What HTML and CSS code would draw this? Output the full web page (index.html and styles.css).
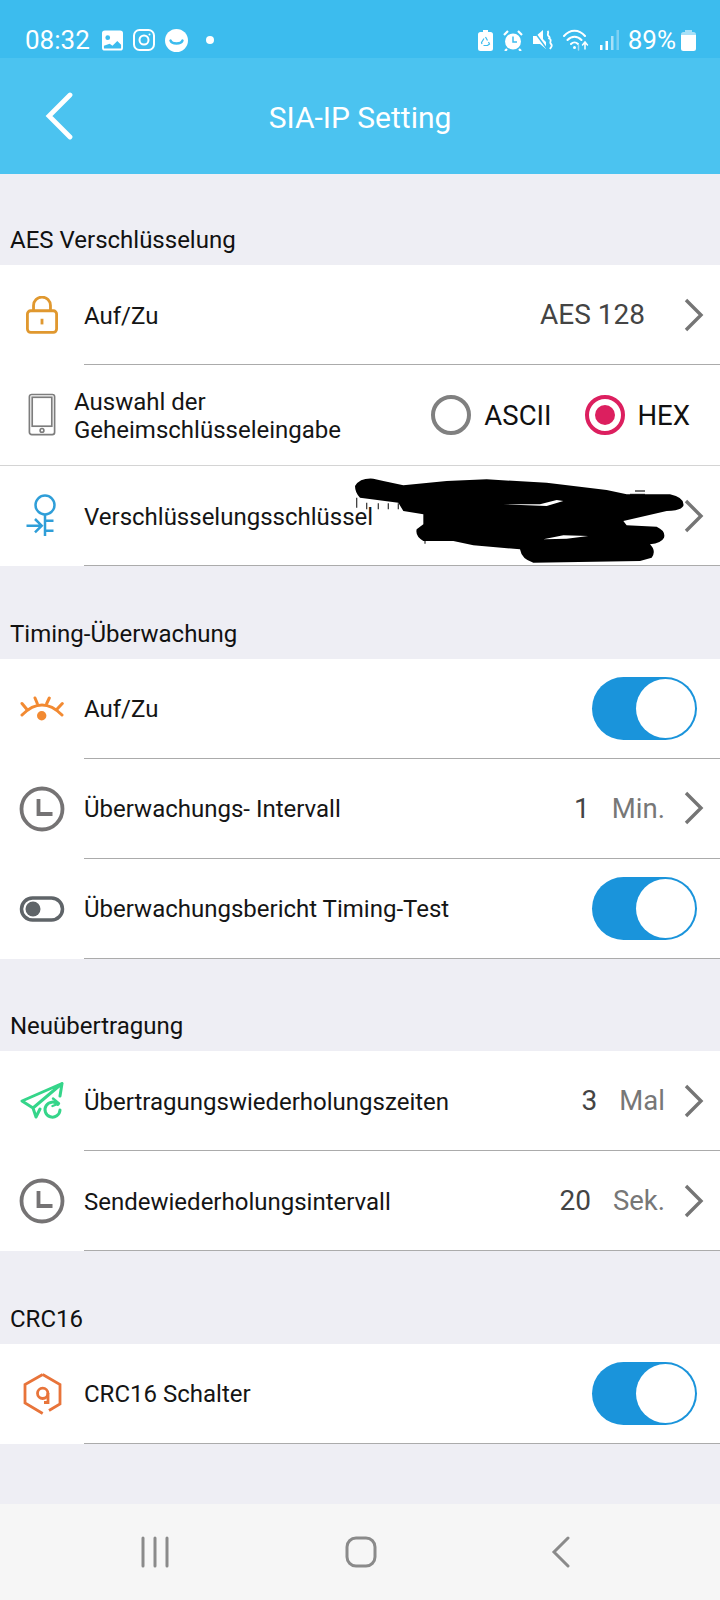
FILE: index.html
```html
<!DOCTYPE html>
<html lang="de">
<head>
<meta charset="utf-8">
<title>SIA-IP Setting</title>
<link rel="stylesheet" href="styles.css">
</head>
<body>
<div class="app">
  <div class="statusbar">
    <div class="sb-left">
      <span class="time">08:32</span>
      <svg class="si si-a" width="21" height="21" viewBox="0 0 22 21"><path fill="#fff" fill-rule="evenodd" d="M3 0h16a3 3 0 0 1 3 3v15a3 3 0 0 1-3 3H3a3 3 0 0 1-3-3V3a3 3 0 0 1 3-3zM2 16v2a1 1 0 0 0 1 1h16a1 1 0 0 0 1-1v-3l-4-4-5 5-3-2zM6 5a2.500 2.500 0 1 0 0 5 2.500 2.500 0 0 0 0-5z"/></svg>
      <svg class="si" width="22" height="22" viewBox="0 0 22 22" fill="none" stroke="#fff" stroke-width="2"><rect x="1" y="1" width="20" height="20" rx="5.500"/><circle cx="11" cy="11" r="4.500"/><circle cx="16.500" cy="5.500" r="1" fill="#fff" stroke="none"/></svg>
      <svg class="si" width="23" height="23" viewBox="0 0 23 23"><circle cx="11.500" cy="11.500" r="11.500" fill="#fff"/><path d="M5.500 11.500c1.500 4 10.500 4 12 0" fill="none" stroke="#3cbcee" stroke-width="2.400" stroke-linecap="round"/></svg>
      <span class="dot"></span>
    </div>
    <div class="sb-right">
      <svg width="15" height="21" viewBox="0 0 15 21"><path fill="#fff" d="M5 0h5v2h2.500A2.500 2.500 0 0 1 15 4.500V18.500A2.500 2.500 0 0 1 12.500 21h-10A2.500 2.500 0 0 1 0 18.500V4.500A2.500 2.500 0 0 1 2.500 2H5z"/><path d="M7.500 7l2 3.500M10.500 12l1 2-2 1.500h-4M4 14l-.5-1.500 2.500-4" fill="none" stroke="#3cbcee" stroke-width="1.200"/></svg>
      <svg width="20" height="21" viewBox="0 0 20 21"><circle cx="10" cy="11.500" r="8" fill="#fff"/><path d="M10 6.500v5.500h4" fill="none" stroke="#3cbcee" stroke-width="1.500"/><path d="M1 5l4-4M19 5l-4-4M4 19l-2 2M16 19l2 2" stroke="#fff" stroke-width="2.200"/></svg>
      <svg width="20" height="20" viewBox="0 0 20 20"><path fill="#fff" d="M0 6h3l7-6v9l3 3v7L7 14H0z"/><path d="M0 0l14 19" stroke="#3cbcee" stroke-width="1.500"/><path d="M14.500 1c2 2-1 3 1 5s1 2 0 3M17 9c2 2-1 3 1 5s0 3-1 5" fill="none" stroke="#fff" stroke-width="1.800"/></svg>
      <svg width="27" height="22" viewBox="0 0 27 22" fill="none" stroke="#fff" stroke-width="2" stroke-linecap="round"><path d="M1 7c6-7 15-7 21 0M4.500 11c4-4.500 10-4.500 14 0M8 15c2-2 5-2 7 0"/><circle cx="11.500" cy="18.500" r="1.500" fill="#fff" stroke="none"/><path d="M22 20v-6M19.500 16l2.500-3 2.500 3" stroke-width="1.500"/><path d="M15.500 16v5" stroke="#9fdcf5" stroke-width="1.500"/></svg>
      <svg width="19" height="20" viewBox="0 0 19 20"><rect x="0" y="15" width="2.500" height="5" fill="#fff"/><rect x="5.500" y="11" width="2.500" height="9" fill="#fff"/><rect x="11" y="6" width="2.500" height="14" fill="#a9e0f7"/><rect x="16.500" y="0" width="2.500" height="20" fill="#7dd0f3"/></svg>
      <span class="batt">89%</span>
      <svg width="15" height="21" viewBox="0 0 15 21"><path fill="#a9e0f7" d="M4 0h7v2h1.500A2.500 2.500 0 0 1 15 4.500V5H0v-.5A2.500 2.500 0 0 1 2.500 2H4z"/><path fill="#fff" d="M0 5h15v13.500a2.500 2.500 0 0 1-2.500 2.500h-10A2.500 2.500 0 0 1 0 18.500z"/></svg>
    </div>
  </div>

  <header class="topbar">
    <svg class="back" width="30" height="48" viewBox="0 0 30 48"><path d="M26 3L5 24l21 21" fill="none" stroke="#fff" stroke-width="4.800" stroke-linecap="round" stroke-linejoin="miter"/></svg>
    <h1 class="title">SIA-IP Setting</h1>
  </header>

  <main class="content">
    <h2 class="section section-first">AES Verschlüsselung</h2>
    <div class="group">
      <div class="row">
        <div class="ico"><svg width="32" height="38" viewBox="0 0 34 40" fill="none" stroke="#e0982f" stroke-width="3"><rect x="1.500" y="15.500" width="31" height="23" rx="3.500"/><path d="M8 15V10a9 9 0 0 1 18 0v5"/><path d="M17 24v6"/></svg></div>
        <div class="body">
          <span class="label">Auf/Zu</span>
          <span class="value value-solo">AES 128</span>
          <svg class="chev" width="22" height="34" viewBox="0 0 22 34"><path d="M3 2l15 15L3 32" fill="none" stroke="#757575" stroke-width="3.400"/></svg>
        </div>
      </div>
      <div class="row row-radio">
        <div class="ico ico-narrow"><svg width="28" height="44" viewBox="0 0 30 46" fill="none" stroke="#7d7d7d" stroke-width="1.800"><rect x="1.500" y="1" width="27" height="43" rx="2.500"/><rect x="4.500" y="4" width="21" height="31"/><circle cx="15" cy="39.500" r="2"/></svg></div>
        <div class="body body-radio">
          <span class="label label-two">Auswahl der<br>Geheimschlüsseleingabe</span>
          <div class="radio"><span class="circle"></span><span>ASCII</span></div>
          <div class="radio radio-on"><span class="circle"></span><span>HEX</span></div>
        </div>
      </div>
      <div class="row row-key">
        <div class="ico"><svg width="32" height="44" viewBox="0 0 32 44" fill="none" stroke="#2f9ed8" stroke-width="2.500"><circle cx="19" cy="11" r="9.500"/><path d="M19 20.500V42M0.500 31.700h15M9 25l6.700 6.700L9 38.400M19 26.700h8.500M19 36.700h8.500"/></svg></div>
        <div class="body">
          <span class="label">Verschlüsselungsschlüssel</span>
          <svg class="chev" width="22" height="34" viewBox="0 0 22 34"><path d="M3 2l15 15L3 32" fill="none" stroke="#757575" stroke-width="3.400"/></svg>
        </div>
        <svg class="scribble" width="370" height="105" viewBox="0 0 1110 315"><path d="M50 95v30M80 110v20M115 112v18M145 112v18M175 112v18M255 215v18M870 85h45M885 75h30" fill="none" stroke="#444" stroke-width="4"/><path fill="#000" d="M45 60Q60 35 100 38L130 45 190 58 320 45 440 40 620 50 800 72 860 85 990 85Q1035 95 1030 120 1020 135 980 135L850 165 860 178 950 182Q978 195 972 215 965 230 930 235 950 255 935 275L900 285 580 290Q545 280 540 250L400 238 340 225 250 225Q225 210 230 190L250 175 250 145 190 135 175 110 60 95Q45 80 45 60Z"/><path fill="#fff" d="M490 115L600 115 650 102 670 105 620 120ZM610 220L670 208 745 210 680 218Z"/></svg>
      </div>
    </div>

    <h2 class="section">Timing-Überwachung</h2>
    <div class="group">
      <div class="row">
        <div class="ico"><svg width="44" height="26" viewBox="0 0 44 26" fill="none" stroke="#f28a32" stroke-width="3" stroke-linecap="round"><path d="M2 19Q22-1 42 19"/><path d="M15 2l2.300 5.500M29.300 2l-2.600 5.500M2 7.500l5 6M42.300 7.500l-5.600 6"/><circle cx="21.700" cy="19.700" r="4.700" fill="#f28a32" stroke="none"/></svg></div>
        <div class="body"><span class="label">Auf/Zu</span><span class="toggle"></span></div>
      </div>
      <div class="row">
        <div class="ico"><svg class="clock" width="46" height="46" viewBox="0 0 46 46" fill="none" stroke="#757374" stroke-width="3.800"><circle cx="23" cy="23" r="20.500"/><path d="M19.500 13v15h14"/></svg></div>
        <div class="body"><span class="label">Überwachungs- Intervall</span><span class="value">1</span><span class="unit">Min.</span>
          <svg class="chev" width="22" height="34" viewBox="0 0 22 34"><path d="M3 2l15 15L3 32" fill="none" stroke="#757575" stroke-width="3.400"/></svg></div>
      </div>
      <div class="row">
        <div class="ico"><svg width="46" height="26" viewBox="0 0 46 26"><rect x="2.500" y="2" width="41" height="22" rx="11" fill="none" stroke="#5f6468" stroke-width="3.500"/><circle cx="14" cy="13" r="7.500" fill="#5f6468"/></svg></div>
        <div class="body"><span class="label">Überwachungsbericht Timing-Test</span><span class="toggle"></span></div>
      </div>
    </div>

    <h2 class="section">Neuübertragung</h2>
    <div class="group">
      <div class="row">
        <div class="ico"><svg width="44" height="38" viewBox="0 0 44 38" fill="none" stroke="#35d58a" stroke-width="3" stroke-linejoin="round" stroke-linecap="round"><path d="M42 1.500L2 19l11 7 3 9 4-8M42 1.500L13 26M42 1.500L40 14"/><path d="M38 22.500a7.500 7.500 0 1 0 2 5.500"/><path d="M33 16.500l6 5-6.500 2.500" stroke-width="2.400"/></svg></div>
        <div class="body"><span class="label">Übertragungswiederholungszeiten</span><span class="value">3</span><span class="unit">Mal</span>
          <svg class="chev" width="22" height="34" viewBox="0 0 22 34"><path d="M3 2l15 15L3 32" fill="none" stroke="#757575" stroke-width="3.400"/></svg></div>
      </div>
      <div class="row">
        <div class="ico"><svg class="clock" width="46" height="46" viewBox="0 0 46 46" fill="none" stroke="#757374" stroke-width="3.800"><circle cx="23" cy="23" r="20.500"/><path d="M19.500 13v15h14"/></svg></div>
        <div class="body"><span class="label">Sendewiederholungsintervall</span><span class="value">20</span><span class="unit">Sek.</span>
          <svg class="chev" width="22" height="34" viewBox="0 0 22 34"><path d="M3 2l15 15L3 32" fill="none" stroke="#757575" stroke-width="3.400"/></svg></div>
      </div>
    </div>

    <h2 class="section">CRC16</h2>
    <div class="group">
      <div class="row">
        <div class="ico"><svg width="39" height="42" viewBox="0 0 39 42" fill="none" stroke="#e8743a" stroke-width="2.800"><path d="M19.700 1.500L37 11.500v19.500l-11 6.500M19.700 40.500L2 30V11.500L19.700 1.500"/><circle cx="19.700" cy="20.300" r="5.200"/><path d="M25 20v9.500h-4"/></svg></div>
        <div class="body"><span class="label">CRC16 Schalter</span><span class="toggle"></span></div>
      </div>
    </div>
  </main>

  <nav class="navbar">
    <svg width="30" height="32" viewBox="0 0 30 32"><path d="M3 2v28M15 2v28M27 2v28" stroke="#8a8a8a" stroke-width="3" stroke-linecap="round"/></svg>
    <svg width="32" height="32" viewBox="0 0 32 32"><rect x="2" y="2" width="28" height="28" rx="9" fill="none" stroke="#8a8a8a" stroke-width="3"/></svg>
    <svg width="20" height="32" viewBox="0 0 20 32"><path d="M17 2L3 16l14 14" fill="none" stroke="#8a8a8a" stroke-width="3" stroke-linecap="round"/></svg>
  </nav>
</div>
</body>
</html>
```

FILE: styles.css
```css
* { box-sizing: border-box; }
html, body { margin: 0; padding: 0; }
body { font-family: Roboto, "Liberation Sans", sans-serif; background: #eeeef4; color: #111; }
.app { width: 720px; height: 1600px; display: flex; flex-direction: column; overflow: hidden; }

.statusbar { height: 58px; flex: none; background: #3cbcee; color: #fff; display: flex; justify-content: space-between; align-items: center; padding: 22px 24px 0 25px; }
.sb-left, .sb-right { display: flex; align-items: center; }
.sb-left svg { margin-left: 10px; }
.sb-left .si-a { margin-left: 12px; }
.time { font-size: 26px; }
.dot { width: 8px; height: 8px; border-radius: 50%; background: #fff; margin-left: 18px; }
.sb-right svg { margin-left: 10px; }
.batt { font-size: 26px; margin-left: 9px; }
.sb-right .batt + svg { margin-left: 5px; }

.topbar { height: 116px; flex: none; background: #4bc3f0; position: relative; display: flex; align-items: center; justify-content: center; padding-top: 3px; }
.back { position: absolute; left: 44px; top: 34px; }
.title { margin: 0; font-size: 30px; font-weight: 400; color: #fff; }

.content { flex: 1; display: flex; flex-direction: column; }
.section { margin: 0; height: 92.67px; padding: 0 0 12px 10px; display: flex; align-items: flex-end; font-size: 24px; line-height: 26px; font-weight: 400; color: #111; }
.section-first { height: 91px; }
.group { background: #fff; }
.row { height: 100px; display: flex; position: relative; background: #fff; }
.ico { width: 84px; flex: none; display: flex; align-items: center; justify-content: center; }
.ico svg { flex: none; }
.ico-narrow { width: 74px; justify-content: flex-start; padding-left: 28px; }
.body { flex: 1; display: flex; align-items: center; border-bottom: 1.5px solid #ababab; padding-right: 15px; min-width: 0; }
.label { font-size: 24px; line-height: 30px; flex: 1; white-space: nowrap; color: #151515; padding-top: 2px; }
.value { font-size: 28px; color: #444; }
.unit { font-size: 27.5px; color: #777; margin-left: 22px; }
.chev { margin-left: 18px; flex: none; }
.value-solo + .chev { margin-left: 38px; }

.row-radio { height: 101px; border-bottom: 1.5px solid #d4d4d4; }
.body-radio { border-bottom: none; padding-right: 30px; }
.label-two { line-height: 28px; padding-top: 0; margin-top: 1px; }
.radio { display: flex; align-items: center; font-size: 27.5px; color: #111; margin-left: 33px; }
.circle { width: 40px; height: 40px; border-radius: 50%; border: 4px solid #808080; margin-right: 13px; flex: none; }
.radio-on .circle { border-color: #dc1f5f; position: relative; }
.radio-on .circle::after { content: ""; position: absolute; left: 6px; top: 6px; width: 20px; height: 20px; border-radius: 50%; background: #dc1f5f; }

.toggle { width: 105px; height: 63px; border-radius: 32px; background: #1a94db; position: relative; flex: none; margin-right: 8px; }
.toggle::after { content: ""; position: absolute; right: 2px; top: 2px; width: 59px; height: 59px; border-radius: 50%; background: #fff; }

.scribble { position: absolute; left: 340px; top: 0; overflow: visible; pointer-events: none; }

.navbar { height: 96px; flex: none; background: #f6f6f6; display: flex; align-items: center; padding: 0 149px 0 140px; justify-content: space-between; margin-top: auto; }
```
